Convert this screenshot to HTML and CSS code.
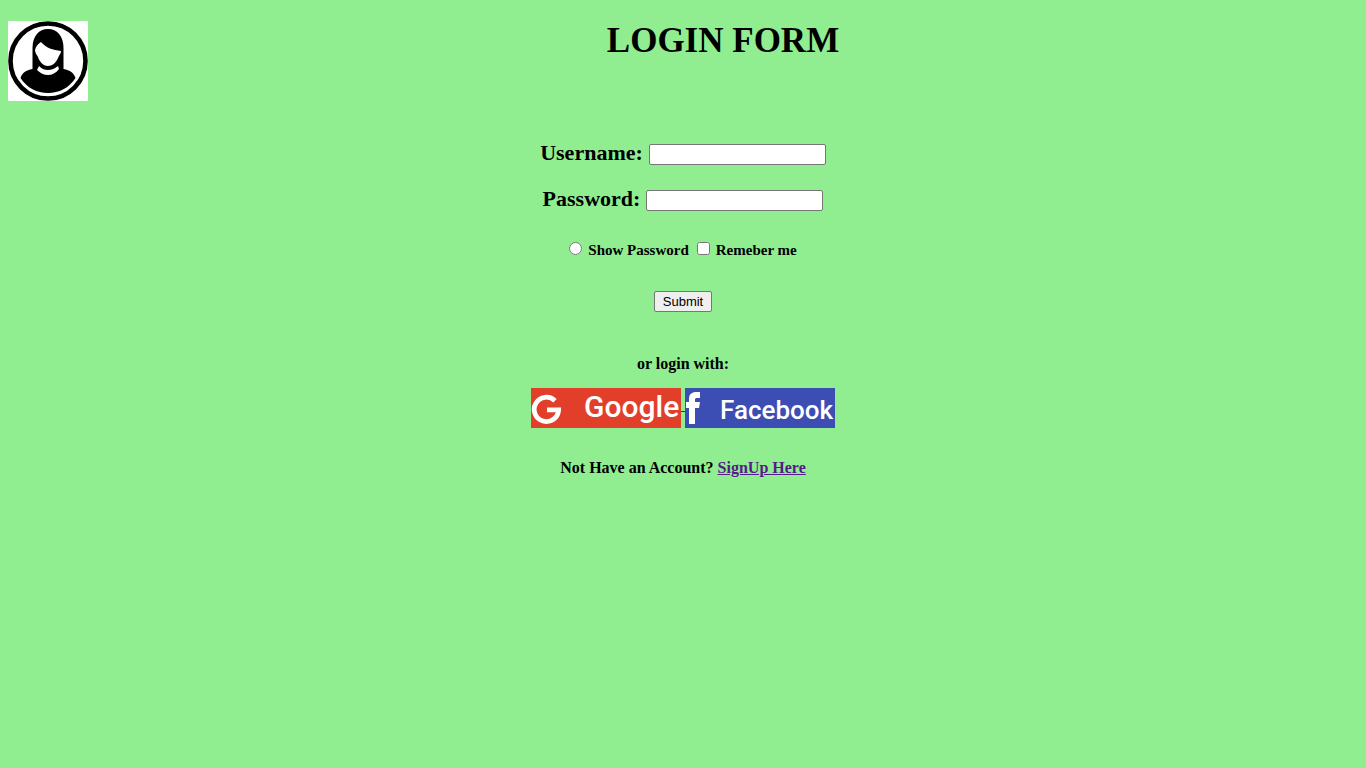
FILE: index.html
```html
<!DOCTYPE html>
<html lang="en">
<head>
<meta charset="utf-8">
<title>Login Form</title>
<link rel="stylesheet" href="styles.css">
</head>
<body class="page">
<header class="header">
<svg class="avatar" viewBox="0 0 80 80" role="img" aria-label="User">
<rect width="80" height="80" fill="#fff"/>
<circle cx="40" cy="40" r="37.5" fill="none" stroke="#000" stroke-width="4.6"/>
<path d="M24.500 48 V27 C24.500 15 31 8 40 8 C49 8 55.500 15 55.500 27 V48 C62 49 66 52 67.500 57 C61 67 51 72 40 72 C29 72 19 67 12.500 57 C14 52 18 49 24.500 48Z"/>
<path fill="#fff" d="M33 21 C38 27 45 29 53 30 C53 33 51 34 50 37 C48 42 44 45 40 45 C35 45 31 40 30 36 C29 34 27 32 27 29 C28 25 30 23 33 21Z"/>
<path fill="#fff" d="M31 45 C34 48 37 49 40 49 C43 49 46 48 50 45 L51 48 C48 52 44 54 40 54 C36 54 32 52 29 49Z"/>
</svg>
<h1 class="title">LOGIN FORM</h1>
</header>
<main>
<form class="form">
<div class="field"><label class="label" for="user">Username:</label><input class="input" id="user" type="text"></div>
<div class="field"><label class="label" for="pass">Password:</label><input class="input" id="pass" type="password"></div>
<div class="options">
<span class="option"><input class="tick" id="show" type="radio"><label for="show">Show Password</label></span>
<span class="option"><input class="tick" id="remember" type="checkbox"><label for="remember">Remeber me</label></span>
</div>
<button class="submit" type="button">Submit</button>
</form>
<section class="social">
<p class="note">or login with:</p>
<div class="providers">
<a class="provider" href="#google"><svg class="logo" viewBox="0 0 150 40">
<rect width="150" height="40" fill="#e23f2b"/>
<path d="M24 12.700 A12.200 12.200 0 1 0 27.600 21.800 H16" fill="none" stroke="#fff" stroke-width="4.800"/>
<text class="google" x="53" y="29">Google</text>
</svg></a><a class="gap" href="#google">&nbsp;</a><a class="provider" href="#facebook"><svg class="logo" viewBox="0 0 150 40">
<rect width="150" height="40" fill="#3c4db3"/>
<path fill="#fff" d="M4 36 V20 H1 V14 H4 V11 C4 6 7 4 11 4 H15 V10 H12 C10.500 10 10 10.500 10 12 V14 H15 L14 20 H10 V36Z"/>
<text class="facebook" x="35" y="31">Facebook</text>
</svg></a>
</div>
</section>
<p class="note">Not Have an Account? <a class="signup" href="#signup">SignUp Here</a></p>
</main>
</body>
</html>
```
FILE: styles.css
```css
.page {
  margin: 0;
  padding: 21px 8px;
  background: lightgreen;
  color: #000;
  font: bold 16px/18px "Century Schoolbook", "Liberation Serif", serif;
}
.header {
  display: flex;
  align-items: flex-start;
}
.avatar {
  width: 80px;
  height: 80px;
  flex: none;
}
.title {
  flex: 1;
  margin: 0;
  text-align: center;
  font-size: 35px;
  line-height: 40px;
}
.form {
  display: flex;
  flex-direction: column;
  align-items: center;
  padding-top: 40px;
}
.field {
  display: flex;
  align-items: center;
  gap: 6px;
  margin-bottom: 20px;
}
.label {
  padding-bottom: 2px;
  font-size: 22px;
  line-height: 24px;
}
.input {
  box-sizing: border-box;
  width: 177px;
  height: 21px;
  border: 1px solid #767676;
  border-radius: 2px;
  padding: 1px 2px;
  background: #fff;
}
.options {
  display: flex;
  gap: 8px;
  margin-top: 7px;
  font-size: 15px;
  line-height: 20px;
}
.option {
  display: flex;
  align-items: flex-start;
  gap: 6px;
}
.tick {
  width: 13px;
  height: 13px;
  margin: 2px 0 0;
}
.submit {
  box-sizing: border-box;
  width: 58px;
  height: 21px;
  margin-top: 31px;
  padding: 0;
  border: 1px solid #767676;
  border-radius: 2px;
  background: #efefef;
  color: #000;
  font: 13px/16px "Liberation Sans", sans-serif;
}
.social {
  padding: 43px 0 31px;
}
.note {
  margin: 0;
  text-align: center;
}
.providers {
  display: flex;
  justify-content: center;
  margin-top: 15px;
}
.provider,
.logo {
  display: block;
  width: 150px;
  height: 40px;
}
.gap,
.signup {
  color: #551a8b;
}
.gap {
  width: 4px;
  padding-top: 8px;
}
.google,
.facebook {
  fill: #fff;
  font-family: Roboto, sans-serif;
  font-weight: 500;
}
.google {
  font-size: 30px;
}
.facebook {
  font-size: 26px;
}
```
